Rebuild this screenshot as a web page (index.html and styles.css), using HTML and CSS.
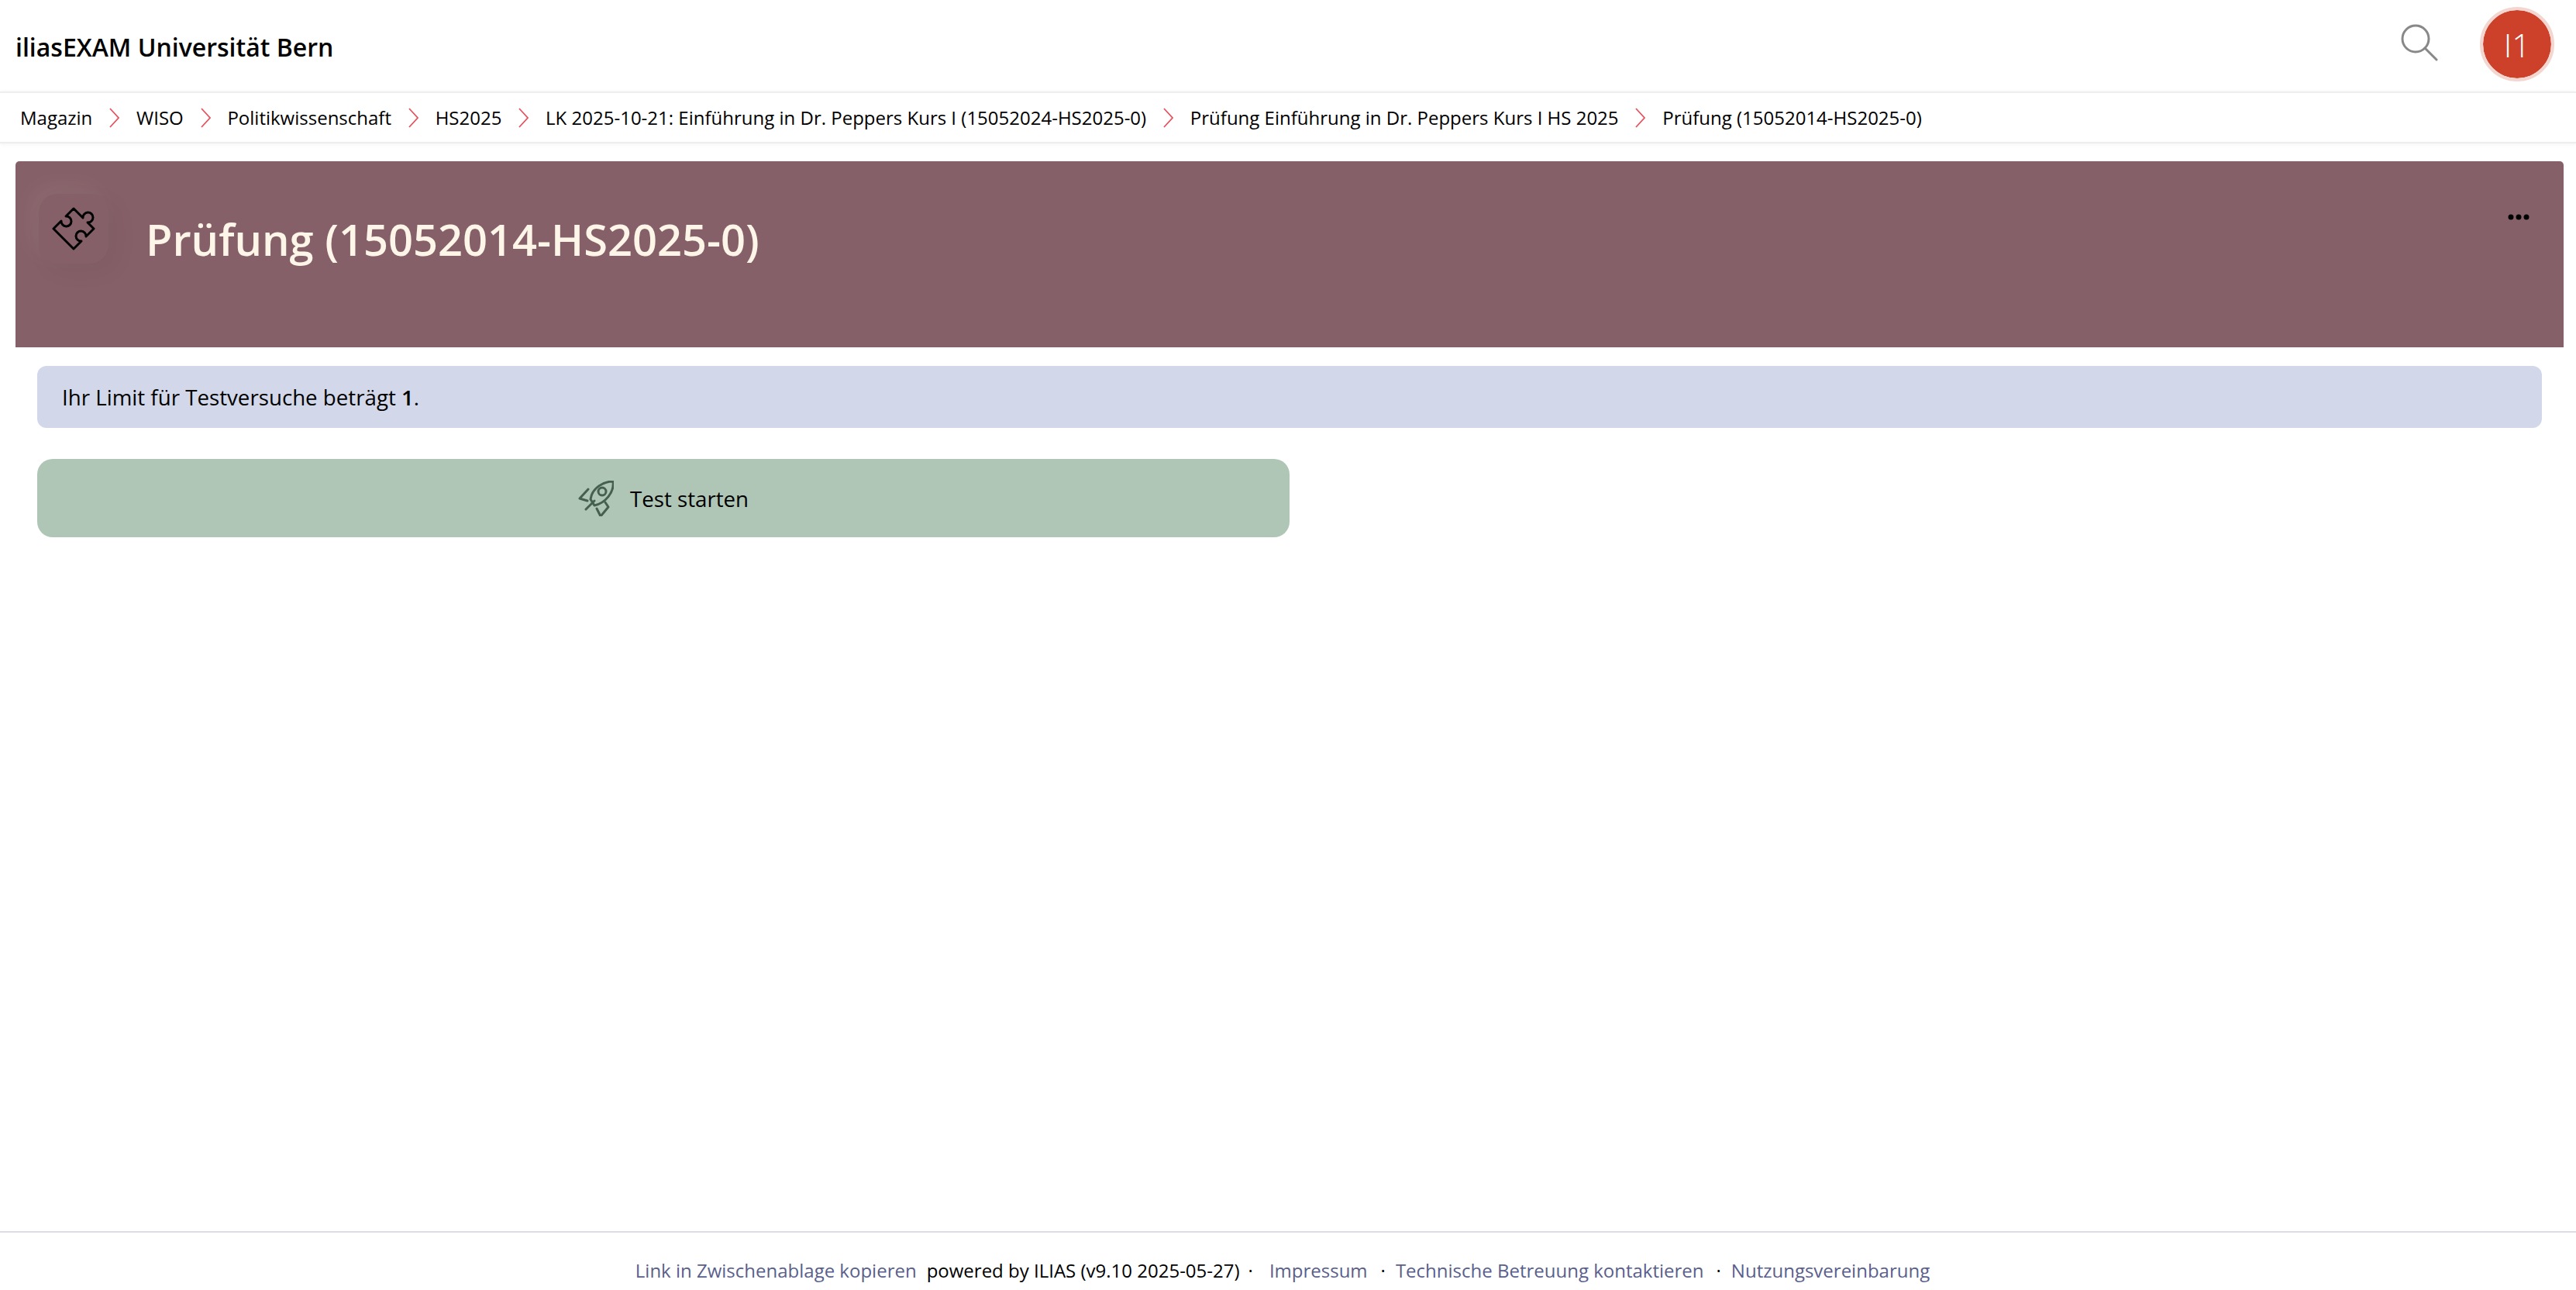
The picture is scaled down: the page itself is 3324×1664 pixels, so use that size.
FILE: index.html
```html
<!DOCTYPE html>
<html lang="de">
<head>
  <meta charset="UTF-8">
  <meta name="viewport" content="width=device-width, initial-scale=1.0">
  <title>Prüfung (15052014-HS2025-0)</title>
  <link rel="stylesheet" href="styles.css">
</head>
<body>
  <header class="topbar">
    <div class="site-title">iliasEXAM Universität Bern</div>
    <div class="topbar-tools">
      <svg class="search-icon" viewBox="0 0 48 48" aria-hidden="true">
        <circle cx="19" cy="19" r="17"/>
        <path d="M31 31 L46 46"/>
      </svg>
      <div class="avatar">I1</div>
    </div>
  </header>

  <nav class="breadcrumbs">
    <a>Magazin</a>
    <svg class="crumb-sep" viewBox="0 0 13 26"><path d="M1 1 L12 13 L1 25"/></svg>
    <a>WISO</a>
    <svg class="crumb-sep" viewBox="0 0 13 26"><path d="M1 1 L12 13 L1 25"/></svg>
    <a>Politikwissenschaft</a>
    <svg class="crumb-sep" viewBox="0 0 13 26"><path d="M1 1 L12 13 L1 25"/></svg>
    <a>HS2025</a>
    <svg class="crumb-sep" viewBox="0 0 13 26"><path d="M1 1 L12 13 L1 25"/></svg>
    <a>LK 2025-10-21: Einführung in Dr. Peppers Kurs I (15052024-HS2025-0)</a>
    <svg class="crumb-sep" viewBox="0 0 13 26"><path d="M1 1 L12 13 L1 25"/></svg>
    <a>Prüfung Einführung in Dr. Peppers Kurs I HS 2025</a>
    <svg class="crumb-sep" viewBox="0 0 13 26"><path d="M1 1 L12 13 L1 25"/></svg>
    <a>Prüfung (15052014-HS2025-0)</a>
  </nav>

  <main class="content">
    <section class="hero">
      <div class="hero-icon">
        <svg class="puzzle" viewBox="0 0 56 56" aria-hidden="true">
          <path d="M28 2 L40 14 A6.5 6.5 0 1 1 46 20 L54 28 L44 38 A6.5 6.5 0 1 0 38 44 L28 54 L2 28 L12 18 A6.5 6.5 0 1 0 18 12 Z"/>
        </svg>
      </div>
      <h1 class="hero-title">Prüfung (15052014-HS2025-0)</h1>
      <svg class="hero-actions" viewBox="0 0 28 8" aria-label="Aktionen">
        <circle cx="4" cy="4" r="3.5"/>
        <circle cx="14" cy="4" r="3.5"/>
        <circle cx="24" cy="4" r="3.5"/>
      </svg>
    </section>

    <div class="panel">
      <div class="message">Ihr Limit für Testversuche beträgt <strong>1</strong>.</div>
      <button class="start-button" type="button">
        <svg class="rocket" viewBox="0 0 46 46" aria-hidden="true">
          <path d="M45 1 C33 1 18 9 16 24 L21 32 C35 29 47 15 45 1 Z"/>
          <circle cx="31" cy="14" r="5"/>
          <path d="M13 11 L2 23 L12 26"/>
          <path d="M24 36 L29 46 L39 34 L35 28"/>
          <path d="M10 37 L21 26"/>
        </svg>
        Test starten
      </button>
    </div>
  </main>

  <footer class="footer">
    <a>Link in Zwischenablage kopieren</a>
    <span class="powered">powered by ILIAS (v9.10 2025-05-27)</span>
    <span class="dot">·</span>
    <a class="imprint">Impressum</a>
    <span class="dot">·</span>
    <a class="support">Technische Betreuung kontaktieren</a>
    <span class="dot">·</span>
    <a>Nutzungsvereinbarung</a>
  </footer>
</body>
</html>
```

FILE: styles.css
```css
html, body {
  height: 100%;
}
body {
  margin: 0;
  display: flex;
  flex-direction: column;
  min-height: 1664px;
  background: #fff;
  color: #000;
  font-family: "Open Sans", Arial, sans-serif;
  overflow: hidden;
}

.topbar {
  height: 118px;
  box-sizing: border-box;
  display: flex;
  align-items: center;
  justify-content: space-between;
  padding: 0 28px 4px 20px;
}
.site-title {
  margin-top: 6px;
  font-size: 32px;
  font-weight: 600;
}
.topbar-tools {
  display: flex;
  align-items: center;
  gap: 54px;
}
.search-icon {
  width: 48px;
  height: 48px;
  margin-bottom: 4px;
  fill: none;
  stroke: #888;
  stroke-width: 3;
  stroke-linecap: round;
}
.avatar {
  width: 88px;
  height: 88px;
  border: 4px solid #f3d6d0;
  border-radius: 50%;
  background: #cd412b;
  background-clip: padding-box;
  color: #fff;
  font-size: 42px;
  font-weight: 300;
  display: flex;
  align-items: center;
  justify-content: center;
}

.breadcrumbs {
  height: 67px;
  box-sizing: border-box;
  display: flex;
  align-items: center;
  padding-left: 26px;
  font-size: 24px;
  border-top: 2px solid #eee;
  border-bottom: 2px solid #eee;
  box-shadow: 0 2px 4px rgba(0, 0, 0, 0.04), 0 -1px 3px rgba(0, 0, 0, 0.03);
}
.crumb-sep {
  width: 13px;
  height: 26px;
  margin: 0 21.85px;
  fill: none;
  stroke: #e5535e;
  stroke-width: 1.8;
}

.content {
  flex: 1;
  padding: 23px 16px 0 20px;
}
.hero {
  height: 240px;
  box-sizing: border-box;
  display: flex;
  align-items: flex-start;
  padding: 42px 44px 0 30px;
  background: #866068;
  border-radius: 5px 5px 0 0;
}
.hero-icon {
  width: 90px;
  height: 90px;
  flex: none;
  display: flex;
  align-items: center;
  justify-content: center;
  background: #866068;
  border-radius: 24px;
  box-shadow: -10px -10px 30px rgba(255, 255, 255, 0.06), 10px 10px 30px rgba(0, 0, 0, 0.05);
}
.puzzle {
  width: 56px;
  height: 56px;
  fill: none;
  stroke: #000;
  stroke-width: 3;
  stroke-linejoin: round;
}
.hero-title {
  flex: 1;
  margin: 20px 0 0 48px;
  font-size: 56px;
  font-weight: 600;
  line-height: 76px;
  color: #fdf5e8;
}
.hero-actions {
  width: 28px;
  height: 8px;
  margin-top: 26px;
  fill: #000;
}

.panel {
  padding: 24px 28px 0;
}
.message {
  height: 80px;
  box-sizing: border-box;
  display: flex;
  align-items: center;
  padding: 0 32px;
  background: #d2d8ea;
  border-radius: 12px;
  font-size: 27.7px;
  white-space: pre;
}
.message strong {
  font-weight: 600;
}
.start-button {
  width: 1616px;
  height: 101px;
  margin-top: 40px;
  display: flex;
  align-items: center;
  justify-content: center;
  gap: 21px;
  border: 0;
  border-radius: 20px;
  background: #afc6b6;
  color: #000;
  font-family: inherit;
  font-size: 27.7px;
}
.rocket {
  width: 46px;
  height: 46px;
  fill: none;
  stroke: #45604f;
  stroke-width: 3;
  stroke-linejoin: round;
  stroke-linecap: round;
}

.footer {
  height: 76px;
  box-sizing: border-box;
  border-top: 2px solid #e0dce4;
  display: flex;
  align-items: center;
  justify-content: center;
  padding: 23px 14px 0 0;
  font-size: 24px;
}
.footer a {
  color: #5a5f8c;
}
.powered {
  margin-left: 13px;
}
.dot {
  margin: 0 13px 0 11px;
}
.imprint {
  margin: 0 6px 0 8px;
}
.support {
  margin-right: 5px;
}
```
